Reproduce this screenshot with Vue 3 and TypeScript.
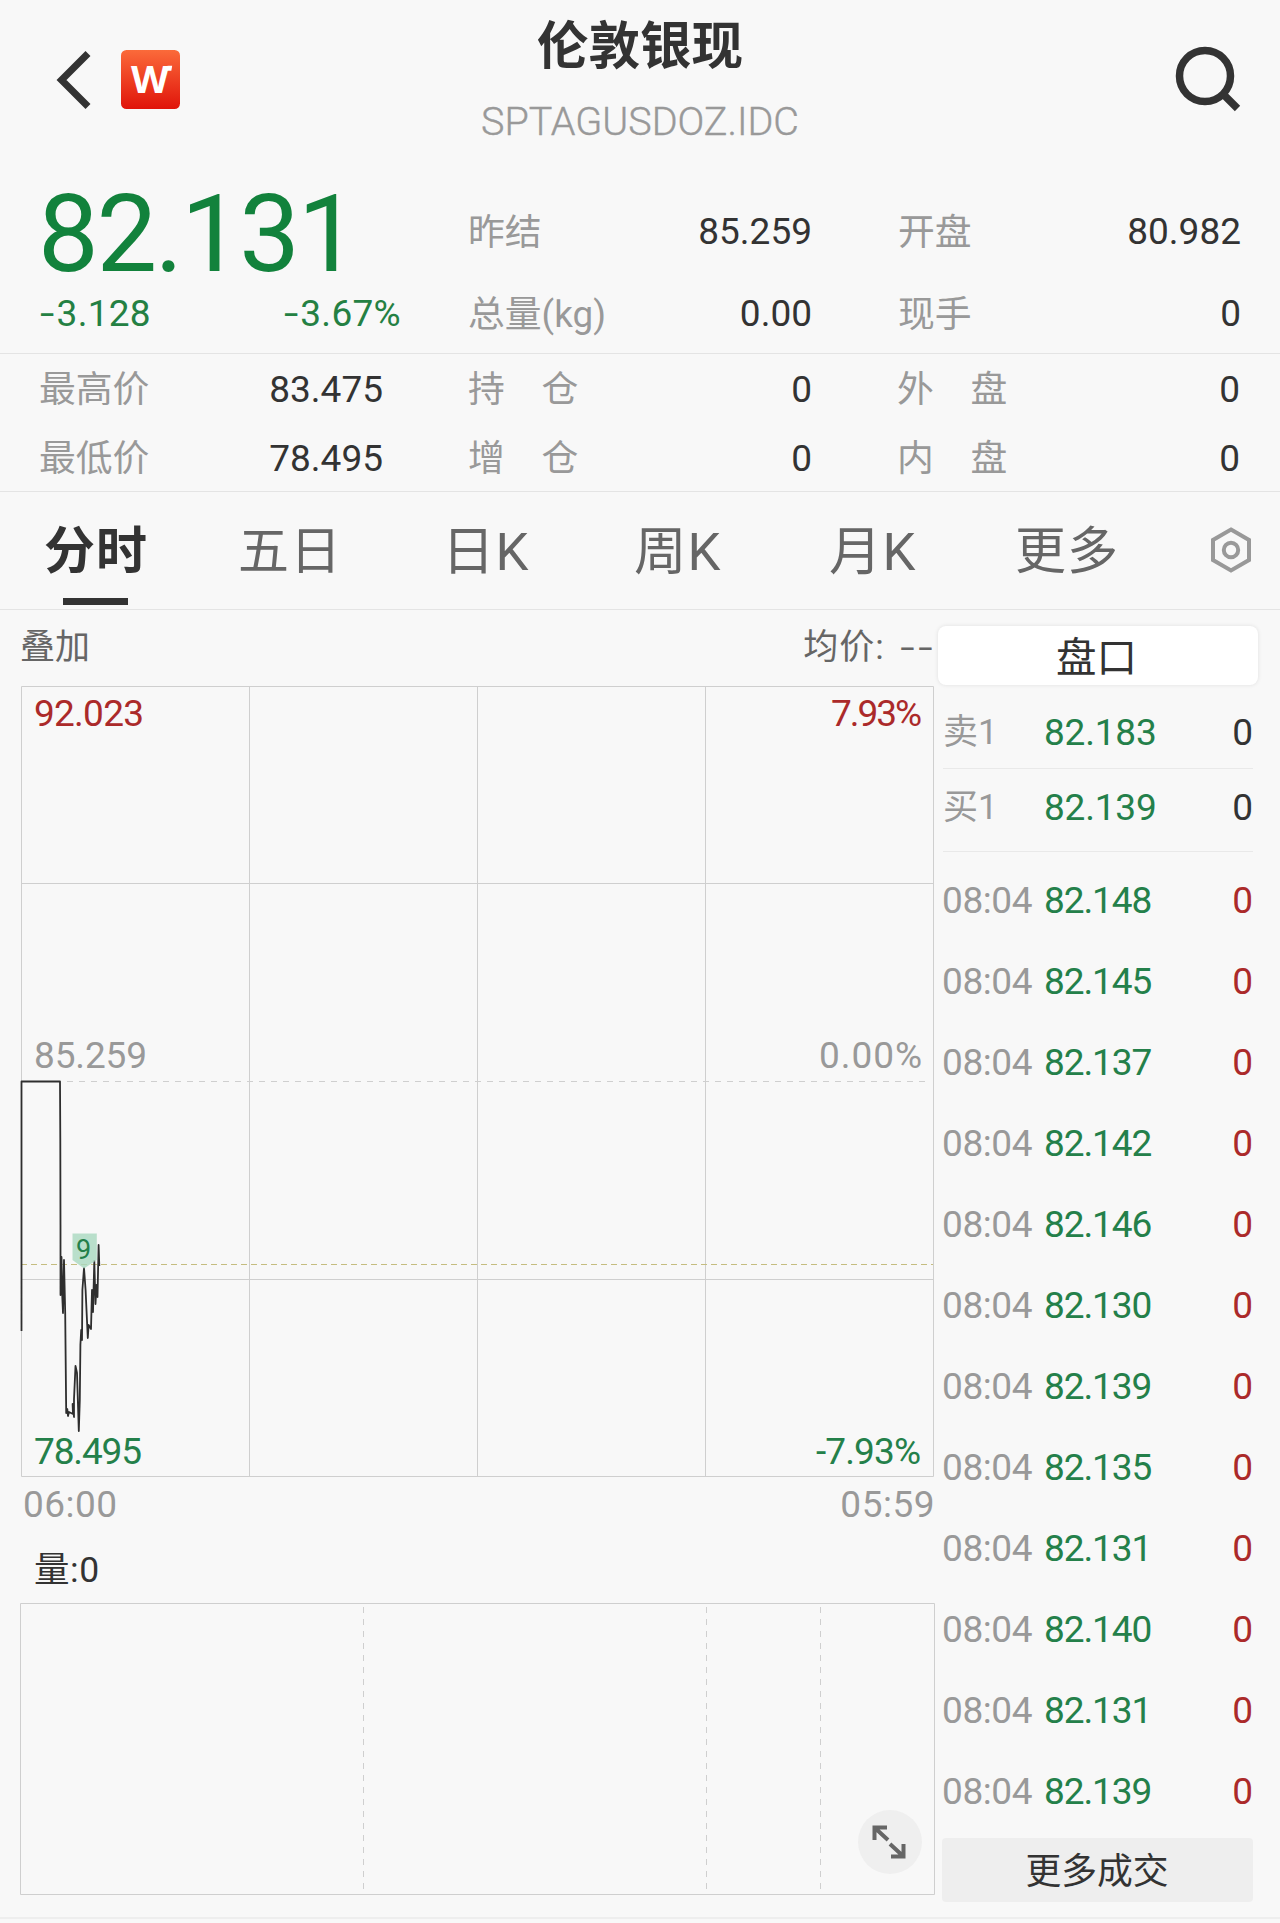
<script setup lang="ts">
interface Cell { label: string; value: string }
interface Trade { time: string; price: string; volume: string }

const topCells: Cell[] = [
  { label: '昨结', value: '85.259' },
  { label: '开盘', value: '80.982' },
  { label: '总量(kg)', value: '0.00' },
  { label: '现手', value: '0' },
]
const bottomCells: Cell[] = [
  { label: '最高价', value: '83.475' },
  { label: '持　仓', value: '0' },
  { label: '外　盘', value: '0' },
  { label: '最低价', value: '78.495' },
  { label: '增　仓', value: '0' },
  { label: '内　盘', value: '0' },
]
const tabs: string[] = ['分时', '五日', '日K', '周K', '月K', '更多']
const quotes: Cell[] = [
  { label: '卖1', value: '82.183' },
  { label: '买1', value: '82.139' },
]
const trades: Trade[] = [
  '82.148', '82.145', '82.137', '82.142', '82.146', '82.130',
  '82.139', '82.135', '82.131', '82.140', '82.131', '82.139',
].map((price) => ({ time: '08:04', price, volume: '0' }))

const priceLine =
  'M21.5 1331V1081.5H60L60.3 1139L60.5 1225V1295L61.5 1257L62.3 1297L63 1313L64 1260L65.2 1313L66.2 1413L67.3 1409L68 1416L69 1412L73 1414L72.6 1404L74 1417V1399L75.5 1366L77 1373L78 1405L78.8 1431L79.8 1400L80.4 1345L81.2 1330L82 1340L82.4 1290L84 1268L85.6 1290L86.5 1310L87.8 1338L88.6 1325L91 1329L92 1290L93 1312L94.3 1261L95.5 1304L96.5 1285L97.5 1297L98.6 1245L99.3 1266'
</script>

<template>
  <div class="app">
    <header class="header">
      <div class="nav">
        <svg class="back" width="36" height="60" viewBox="0 0 36 60"><path d="M32 3.500L5.500 30L32 56.500" /></svg>
        <svg class="logo" width="60" height="60" viewBox="0 0 60 60">
          <defs>
            <linearGradient id="logoFill" x1="0" y1="0" x2="0" y2="1">
              <stop offset="0" stop-color="#fb6a3a" /><stop offset="1" stop-color="#e0140a" />
            </linearGradient>
          </defs>
          <rect x="0" y="0" width="59" height="59" rx="5.500" fill="url(#logoFill)" />
          <text x="10" y="43" textLength="38" lengthAdjust="spacingAndGlyphs">W</text>
          <path d="M42.500 20Q43.500 15.800 47.500 15.800H51.200L50.300 20.800H46Z" fill="#fff" />
        </svg>
      </div>
      <div class="heading">
        <h1>伦敦银现</h1>
        <p>SPTAGUSDOZ.IDC</p>
      </div>
      <svg class="search" width="72" height="72" viewBox="0 0 72 72"><circle cx="34" cy="34" r="25.500" /><path d="M51 51L66.500 66.500" /></svg>
    </header>

    <section class="summary">
      <div class="price">
        <strong>82.131</strong>
        <div class="change"><span><i>-</i>3.128</span><span><i>-</i>3.67%</span></div>
      </div>
      <div class="top-grid">
        <div v-for="c in topCells" :key="c.label" class="cell"><span>{{ c.label }}</span><b>{{ c.value }}</b></div>
      </div>
    </section>

    <section class="bottom-grid">
      <div v-for="c in bottomCells" :key="c.label" class="cell"><span>{{ c.label }}</span><b>{{ c.value }}</b></div>
    </section>

    <nav class="tabs">
      <span v-for="(t, i) in tabs" :key="t" :class="{ active: i === 0, latin: t.endsWith('K') }">{{ t }}</span>
      <svg width="42" height="48" viewBox="0 0 42 48"><path d="M21 3.500L39 14V34L21 44.500L3 34V14Z" /><circle cx="21" cy="24" r="7.200" /></svg>
    </nav>

    <main class="body">
      <section class="charts">
        <div class="chart-head"><span>叠加</span><div class="avg"><span>均价:</span><em>--</em></div></div>
        <svg class="chart" width="916" height="792" viewBox="20 686 916 792">
          <path class="grid" d="M21.500 686.500H933.500V1476.500H21.500ZM249.500 686V1476M477.500 686V1476M705.500 686V1476M21 883.500H933M21 1279.500H933" />
          <path class="zero" d="M67 1081.500H925" />
          <path class="now" d="M21 1264.500H933" />
          <path class="line" :d="priceLine" />
          <path d="M72.500 1233.500H96.800V1260L84 1268.500L72.500 1260Z" fill="#a9d8bf" fill-opacity=".8" />
          <text class="green" x="76" y="1258.500" font-size="27">9</text>
          <text class="red" x="34" y="726" textLength="110">92.023</text>
          <text class="red" x="831" y="726" textLength="91">7.93%</text>
          <text class="gray" x="34" y="1068" textLength="113">85.259</text>
          <text class="gray" x="819" y="1068" textLength="103">0.00%</text>
          <text class="green" x="34" y="1464" textLength="108">78.495</text>
          <text class="green" x="816" y="1464" textLength="105">-7.93%</text>
        </svg>
        <div class="times"><span>06:00</span><span>05:59</span></div>
        <div class="vol-label">量:0</div>
        <div class="volume">
          <svg width="916" height="293" viewBox="20 1603 916 293">
            <path class="grid" d="M20.500 1603.500H934.500V1894.500H20.500Z" />
            <path class="dash" d="M363.500 1607V1894M706.500 1607V1894M820.500 1607V1894" />
          </svg>
          <button class="expand" aria-label="全屏">
            <svg width="36" height="36" viewBox="0 0 36 36"><path d="M16 3.500H3.500V16M4 4L17 16M20 32.500H32.500V20M32 32L19 20" /></svg>
          </button>
        </div>
      </section>

      <aside class="side">
        <div class="side-tab">盘口</div>
        <div class="quotes">
          <div v-for="q in quotes" :key="q.label" class="quote">
            <span>{{ q.label }}</span><b>{{ q.value }}</b><i>0</i>
          </div>
        </div>
        <div class="trades">
          <div v-for="(t, i) in trades" :key="i" class="trade">
            <span>{{ t.time }}</span><b>{{ t.price }}</b><i>{{ t.volume }}</i>
          </div>
        </div>
        <button class="more">更多成交</button>
      </aside>
    </main>
  </div>
</template>

<style>
body { background: #f8f8f8; }
</style>

<style scoped>
.app {
  width: 1280px; height: 1923px; box-sizing: border-box; overflow: hidden;
  background: #f8f8f8; color: #333;
  font-family: Roboto, "Noto Sans CJK SC", sans-serif; font-size: 37px; line-height: 44px;
}
b, i, em, strong { font-weight: 400; font-style: normal; }
button { border: 0; padding: 0; font: inherit; color: inherit; }
svg { display: block; fill: none; }

.header { display: grid; grid-template-columns: 200px 1fr 200px; height: 172px; }
.nav { display: flex; padding: 50px 0 0 56px; gap: 28px; }
.back path { stroke: #333; stroke-width: 7; }
.logo { margin-left: 1px; }
.logo text { font-family: "Open Sans", sans-serif; font-weight: 700; font-size: 38px; fill: #fff; }
.heading { text-align: center; }
h1 { margin: 15px 0 0; font-size: 51.5px; line-height: 64px; font-weight: 700; }
.heading p { margin: 19px 0 0; color: #999; font-size: 39.5px; line-height: 48px; font-weight: 300; -webkit-text-stroke: .4px #999; }
.search { justify-self: end; margin: 42px 37px 0 0; stroke: #333; stroke-width: 7.5; }

.summary { display: flex; height: 181px; border-bottom: 1px solid #e4e4e4; }
.price { width: 428px; color: #12823c; padding-left: 40px; }
.price strong { display: block; height: 122px; line-height: 125px; margin-left: -2px; font-size: 108px; letter-spacing: -2.3px; }
.change { display: flex; justify-content: space-between; margin: -2px 67px 0 0; color: #248043; letter-spacing: .3px; }
.change i { display: inline-block; transform: scaleX(1.4); transform-origin: left; margin-right: 6px; }
.top-grid { width: 773px; display: grid; grid-template-columns: 344px 343px; column-gap: 86px; grid-template-rows: 82px 82px; padding-top: 19px; }
.cell { display: flex; justify-content: space-between; align-items: center; }
.cell span { color: #999; font-size: 36.8px; padding-top: 1px; }
.cell b { color: #333; }
.bottom-grid { height: 136px; padding-top: 1px; display: grid; grid-template-columns: 344px 344px 343px; column-gap: 85px; grid-template-rows: 69px 69px; padding-left: 39px; border-bottom: 1px solid #e4e4e4; }

.tabs { display: grid; grid-template-columns: 194px 204px 192px 195px 186px 194px 42px; height: 117px; padding-left: 45px; align-items: center; border-bottom: 1px solid #e4e4e4; color: #666; font-size: 51px; line-height: 70px; }
.tabs span { letter-spacing: 1px; position: relative; top: 1px; left: -1px; }
.tabs .latin { font-size: 52.5px; }
.tabs .active { color: #333; font-weight: 700; }
.tabs .active::after { content: ""; position: absolute; left: 19px; top: 81px; width: 65px; height: 7px; background: #333; }
.tabs svg { stroke: #999; stroke-width: 4; margin-bottom: 2px; }

.body { display: flex; height: 1307px; border-bottom: 2px solid #eee; }
.charts { width: 918px; padding-left: 20px; }
.chart-head { display: flex; justify-content: space-between; height: 76px; line-height: 76px; font-size: 35px; color: #666; padding-right: 2px; }
.avg { display: flex; letter-spacing: 1px; }
.chart-head em { display: inline-block; transform: scaleX(1.48); transform-origin: right; margin-left: 27px; letter-spacing: 2.5px; }
.chart { font-size: 37px; }
.grid { stroke: #cfcfcf; }
.zero, .dash { stroke: #cfcfcf; stroke-dasharray: 6 6; }
.now { stroke: #c5bd80; stroke-dasharray: 6 4; }
.line { stroke: #2e2e2e; stroke-width: 1.8; stroke-linejoin: round; }
.red { fill: #ab2a2a; }
.green { fill: #24804a; }
.gray { fill: #999; }
.times { display: flex; justify-content: space-between; color: #999; padding: 0 3px 0 3px; height: 52px; line-height: 53px; letter-spacing: .5px; }
.vol-label { height: 73px; line-height: 80px; padding-left: 14px; font-size: 35.5px; letter-spacing: .6px; }
.volume { position: relative; }
.expand { position: absolute; left: 838px; top: 207px; width: 64px; height: 64px; border-radius: 50%; background: #efefef; display: flex; align-items: center; justify-content: center; }
.expand svg { stroke: #666; stroke-width: 4; margin-right: 2px; }

.side { width: 320px; padding-top: 16px; }
.side-tab { height: 59px; line-height: 64px; border-radius: 8px; background: #fff; text-align: center; text-indent: -3px; font-size: 40.5px; box-shadow: 0 0 4px rgba(0, 0, 0, .1); }
.quotes { margin: 9px 5px 0 5px; }
.quote { display: grid; grid-template-columns: 101px 1fr auto; align-items: center; height: 70px; padding-top: 4px; border-bottom: 1px solid #e9e9e9; }
.quote:last-child { height: 72px; padding-top: 3px; padding-bottom: 7px; }
.quote span { color: #999; font-size: 35px; }
.quote b { color: #24804a; letter-spacing: -.2px; }
.trades { margin: 8px 5px 0 4px; }
.trade { display: grid; grid-template-columns: 102px 1fr auto; align-items: center; height: 81px; }
.trade span { color: #999; letter-spacing: -.4px; }
.trade b { color: #24804a; letter-spacing: -1.1px; }
.trade i { color: #ab2a2a; }
.more { display: block; width: 311px; height: 64px; margin: 6px 0 0 4px; background: #eee; border-radius: 4px; font-size: 35.8px; line-height: 68px; text-indent: -1px; }
</style>
